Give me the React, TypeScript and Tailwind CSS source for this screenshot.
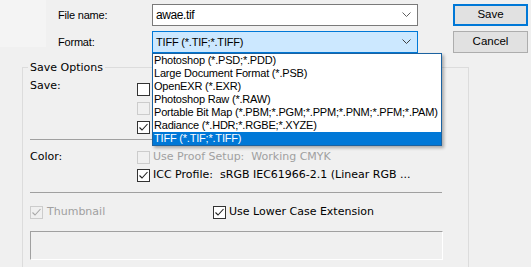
import React from 'react';

const formats = [
  'Photoshop (*.PSD;*.PDD)',
  'Large Document Format (*.PSB)',
  'OpenEXR (*.EXR)',
  'Photoshop Raw (*.RAW)',
  'Portable Bit Map (*.PBM;*.PGM;*.PPM;*.PNM;*.PFM;*.PAM)',
  'Radiance (*.HDR;*.RGBE;*.XYZE)',
  'TIFF (*.TIF;*.TIFF)',
];

const Chevron: React.FC<{ color: string }> = ({ color }) => (
  <svg width="9" height="6" viewBox="0 0 9 6" className="shrink-0">
    <polyline points="0.5,0.5 4.5,4.5 8.5,0.5" fill="none" stroke={color} strokeWidth="1" />
  </svg>
);

const Check: React.FC<{ checked?: boolean; disabled?: boolean }> = ({ checked, disabled }) => (
  <div
    className={`w-[13px] h-[13px] shrink-0 border flex items-center justify-center ${
      disabled ? 'border-[#cccccc] bg-[#f0f0f0]' : 'border-[#333333] bg-white'
    }`}
  >
    {checked && (
      <svg width="11" height="11" viewBox="0 0 11 11">
        <polyline
          points="1.5,5.5 4,8 9.5,2"
          fill="none"
          stroke={disabled ? '#a8a8a8' : '#202020'}
          strokeWidth="1.1"
        />
      </svg>
    )}
  </div>
);

// ligne gravée des boîtes de dialogue Windows
const Separator = ({ className }: { className: string }) => (
  <div className={`w-[412px] h-px bg-[#a0a0a0] ${className}`} />
);

export default function App() {
  const ui = "font-['Liberation_Sans',Arial,sans-serif]";
  const opt = "font-['DejaVu_Sans',Tahoma,sans-serif] text-[11px]";

  return (
    <div className={`relative w-[531px] h-[267px] overflow-hidden bg-[#f0f0f0] text-black ${ui}`}>
      {/* ligne nom + format */}
      <div className="flex">
        <div className="w-[46px] h-[47px] bg-[#f4f4f4]" />
        <div className="w-[106px] pl-[12px] text-[11px] tracking-[-0.2px]">
          <div className="h-[22px] mt-[4px] leading-[22px]">File name:</div>
          <div className="h-[22px] mt-[5px] leading-[22px]">Format:</div>
        </div>
        <div className="w-[266px]">
          <div className="mt-[4px] h-[22px] bg-white border border-[#7a7a7a] flex items-center justify-between pl-[3px] pr-[6px]">
            <span className="text-[12px] tracking-[-0.4px]">awae.tif</span>
            <Chevron color="#606060" />
          </div>
          <div className="mt-[5px] h-[22px] bg-[#cce8ff] border border-[#0078d7] flex items-center justify-between pl-[3px] pr-[6px]">
            <span className="text-[11px] tracking-[-0.2px]">TIFF (*.TIF;*.TIFF)</span>
            <Chevron color="#404040" />
          </div>
        </div>
        <div className="ml-[35px] w-[75px] text-[11.5px]">
          <button className="mt-[4px] w-[75px] h-[22px] bg-[#e1e1e1] border-2 border-[#0078d7] flex items-center justify-center">
            Save
          </button>
          <button className="mt-[5px] w-[75px] h-[22px] bg-[#e1e1e1] border border-[#adadad] flex items-center justify-center">
            Cancel
          </button>
        </div>
      </div>

      {/* options d'enregistrement */}
      <fieldset className={`ml-[22px] mt-[8px] w-[447px] h-[260px] border border-[#dcdcdc] pl-[7px] ${opt}`}>
        <legend className="-ml-[2px] px-[2px] leading-[13px]">Save Options</legend>

        <div className="flex mt-[6px]">
          <div className="w-[107px] -mt-[1px] leading-[13px]">Save:</div>
          <div>
            <div className="h-[19px] flex items-center">
              <Check />
            </div>
            <div className="h-[19px] flex items-center">
              <Check disabled />
            </div>
            <div className="h-[19px] flex items-center">
              <Check checked />
            </div>
          </div>
        </div>

        <Separator className="mt-[2px]" />

        <div className="flex mt-[8px]">
          <div className="w-[107px] leading-[18px]">Color:</div>
          <div>
            <div className="h-[18px] flex items-center gap-[3px]">
              <Check disabled />
              <span className="text-[#a0a0a0] whitespace-pre">Use Proof Setup:  Working CMYK</span>
            </div>
            <div className="h-[18px] flex items-center gap-[3px]">
              <Check checked />
              <span className="whitespace-pre">ICC Profile:  sRGB IEC61966-2.1 (Linear RGB ...</span>
            </div>
          </div>
        </div>

        <Separator className="mt-[8px]" />

        <div className="flex mt-[10px] h-[18px] items-center">
          <div className="w-[183px] flex items-center gap-[4px]">
            <Check checked disabled />
            <span className="text-[#a0a0a0]">Thumbnail</span>
          </div>
          <div className="flex items-center gap-[3px]">
            <Check checked />
            <span>Use Lower Case Extension</span>
          </div>
        </div>

        <div className="mt-[10px] w-[413px] h-[29px] border border-[#a0a0a0] border-r-white border-b-white" />
      </fieldset>

      {/* liste déroulante ouverte du format */}
      <div className="absolute left-[152px] top-[53px] w-[290px] bg-white border border-[#1c62a0] shadow-[2px_2px_3px_rgba(0,0,0,0.3)] text-[11px] tracking-[-0.2px]">
        {formats.map((f, i) => (
          <div
            key={f}
            className={`h-[13px] leading-[13px] pl-[1px] whitespace-nowrap ${
              i === formats.length - 1 ? 'bg-[#0078d7] text-white' : ''
            }`}
          >
            {f}
          </div>
        ))}
      </div>
    </div>
  );
}
